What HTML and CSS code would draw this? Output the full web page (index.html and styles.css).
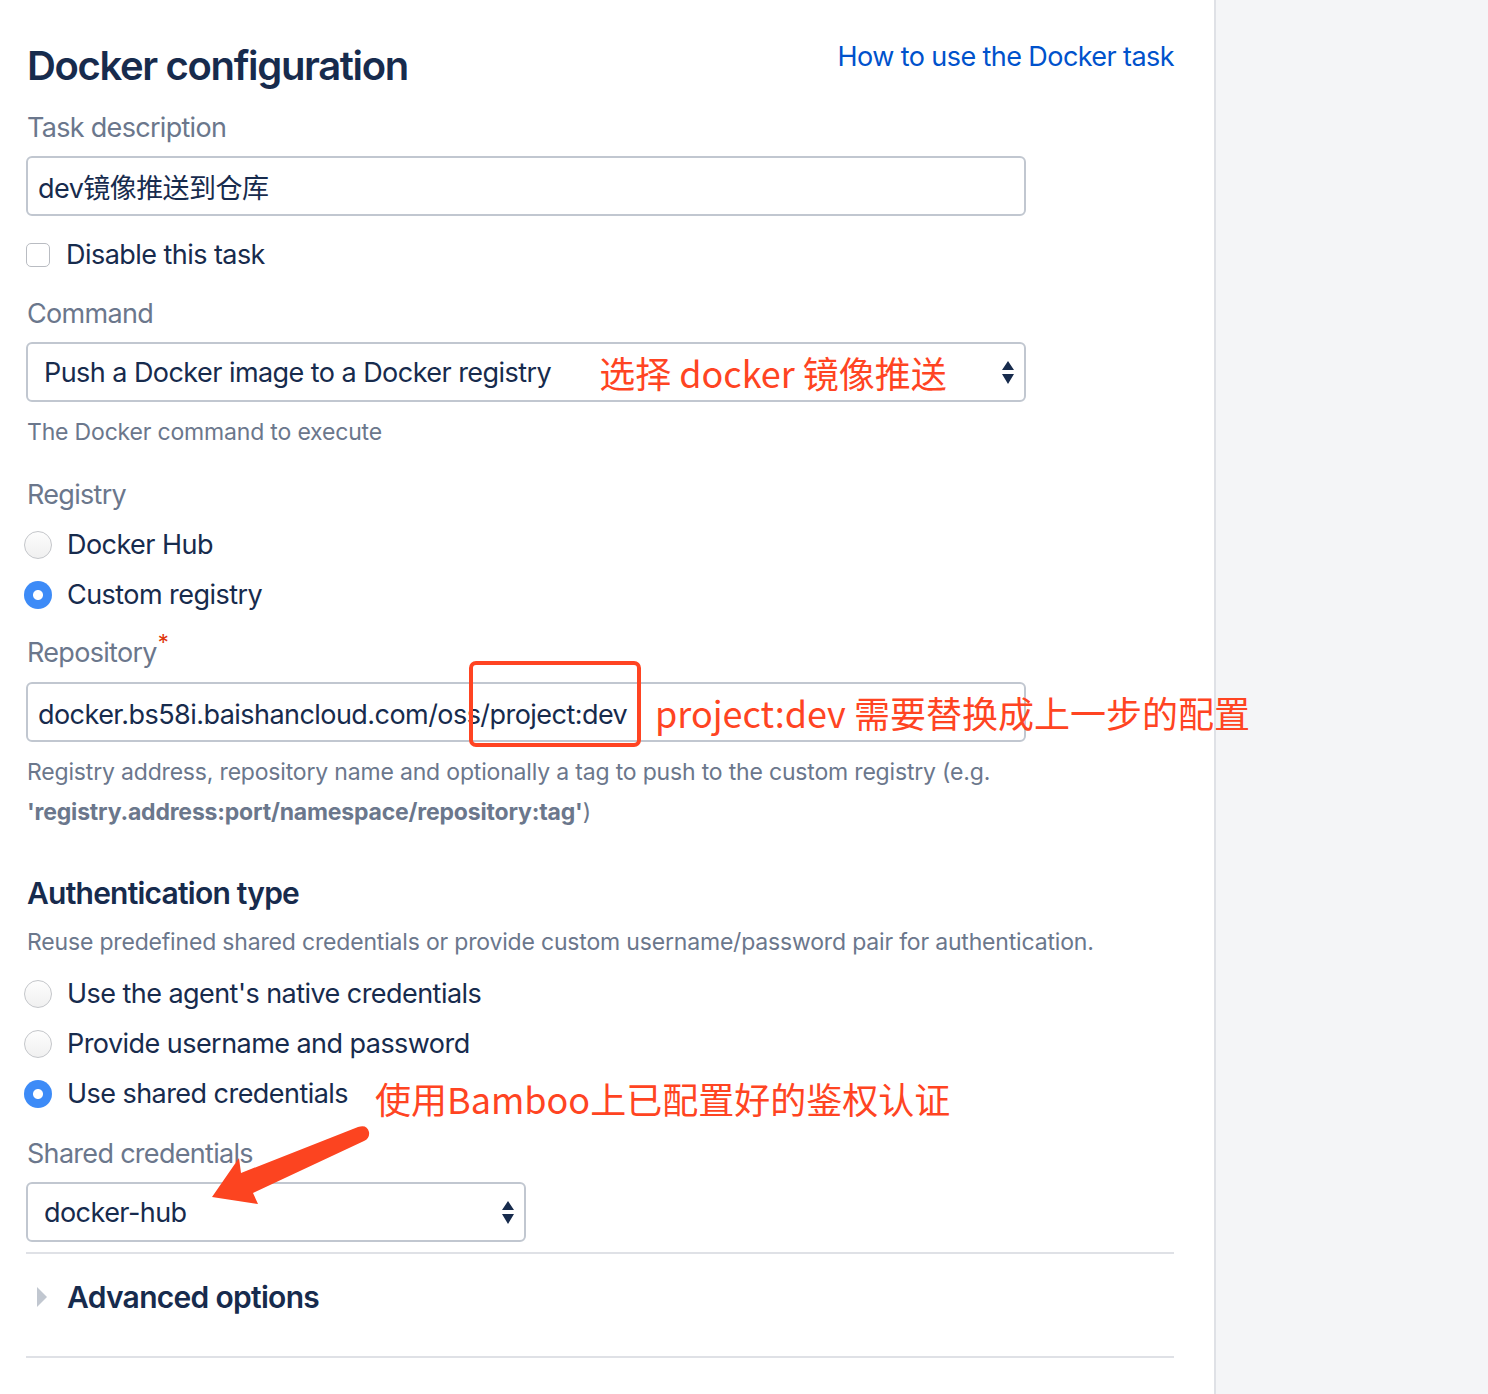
FILE: index.html
```html
<!DOCTYPE html>
<html>
<head>
<meta charset="utf-8">
<link rel="stylesheet" href="styles.css">
</head>
<body>
<div class="page">
  <main class="main">
    <header class="header">
      <h1 class="title">Docker configuration</h1>
      <a class="help-link" href="#">How to use the Docker task</a>
    </header>

    <div class="field field-first">
      <div class="label">Task description</div>
      <div class="input">dev镜像推送到仓库</div>
    </div>

    <label class="check-row">
      <span class="checkbox"></span>
      <span class="opt-text">Disable this task</span>
    </label>

    <div class="field field-command">
      <div class="label">Command</div>
      <div class="select select-wide">
        <span class="select-text">Push a Docker image to a Docker registry</span>
        <span class="annot annot-cmd">选择 docker 镜像推送</span>
        <svg class="updown" width="14" height="26" viewBox="0 0 14 26"><path d="M7 1 L13 10 L1 10 Z M1 14 L13 14 L7 24 Z" fill="#172b4d"/></svg>
      </div>
      <div class="help">The Docker command to execute</div>
    </div>

    <div class="group group-registry">
      <div class="label">Registry</div>
      <div class="radio-row"><span class="radio"></span><span class="opt-text">Docker Hub</span></div>
      <div class="radio-row"><span class="radio checked"></span><span class="opt-text">Custom registry</span></div>
    </div>

    <div class="field field-repo">
      <div class="label">Repository<span class="req">*</span></div>
      <div class="repo-wrap">
        <div class="input input-repo">docker.bs58i.baishancloud.com/oss/project:dev</div>
        <span class="redbox"></span>
        <span class="annot annot-repo">project:dev 需要替换成上一步的配置</span>
      </div>
      <div class="help help-2">Registry address, repository name and optionally a tag to push to the custom registry (e.g. <b>'registry.address:port/namespace/repository:tag'</b>)</div>
    </div>

    <section class="auth">
      <h3 class="auth-title">Authentication type</h3>
      <div class="help auth-desc">Reuse predefined shared credentials or provide custom username/password pair for authentication.</div>
      <div class="radio-row"><span class="radio"></span><span class="opt-text">Use the agent's native credentials</span></div>
      <div class="radio-row"><span class="radio"></span><span class="opt-text">Provide username and password</span></div>
      <div class="radio-row"><span class="radio checked"></span><span class="opt-text">Use shared credentials</span><span class="annot annot-auth">使用Bamboo上已配置好的鉴权认证</span></div>
    </section>

    <div class="field field-shared">
      <div class="label">Shared credentials</div>
      <div class="select select-narrow">
        <span class="select-text">docker-hub</span>
        <svg class="updown" width="14" height="26" viewBox="0 0 14 26"><path d="M7 1 L13 10 L1 10 Z M1 14 L13 14 L7 24 Z" fill="#172b4d"/></svg>
      </div>
    </div>

    <div class="advanced">
      <span class="tri"></span>
      <span class="adv-text">Advanced options</span>
    </div>

    <svg class="red-arrow" width="190" height="100" viewBox="0 0 190 100"><path d="M22 77 L49 38 L51 53 L168 7 Q177 4 179 12 Q180 18 174 21 L63 73 L68 84 Z" fill="#fc4420"/></svg>
  </main>
  <aside class="side"></aside>
</div>
</body>
</html>
```

FILE: styles.css
```css
* { box-sizing: border-box; }
html, body { margin: 0; padding: 0; }
body {
  font-family: Inter, "Noto Sans CJK SC", sans-serif;
  color: #172b4d;
  background: #f4f5f7;
}
.page {
  display: flex;
  width: 1488px;
  min-height: 1394px;
}
.main {
  width: 1216px;
  flex: none;
  background: #fff;
  border-right: 2px solid #dfe1e6;
  padding: 0 40px 0 26px;
  position: relative;
}
.side { flex: 1; background: #f4f5f7; }

.header {
  display: flex;
  justify-content: space-between;
  align-items: flex-start;
  padding-top: 38px;
}
.title {
  margin: 0 0 0 1px;
  font-size: 40px;
  font-weight: 600;
  line-height: 56px;
  letter-spacing: -1.35px;
}
.help-link {
  color: #0052cc;
  text-decoration: none;
  font-size: 27px;
  line-height: 36px;
  margin-top: 1px;
  letter-spacing: -0.58px;
}

.label {
  font-size: 27px;
  line-height: 40px;
  color: #6b778c;
  padding-left: 1px;
  letter-spacing: -0.7px;
}
.field { margin-top: 6px; }
.field-first { margin-top: 14px; }
.label + .input, .label + .select { margin-top: 8px; }

.input, .select {
  height: 60px;
  border: 2px solid #c1c7d0;
  border-radius: 6px;
  font-size: 27px;
  color: #172b4d;
  display: flex;
  align-items: center;
  background: #fff;
  letter-spacing: -0.55px;
}
.input { width: 1000px; padding-left: 10px; }
.input-repo { padding-top: 4px; }
.select { padding-left: 16px; position: relative; }
.select-wide { width: 1000px; }
.select-narrow { width: 500px; }
.updown { position: absolute; right: 9px; top: 16px; }

.check-row {
  display: flex;
  align-items: center;
  height: 50px;
  margin-top: 14px;
}
.checkbox {
  width: 24px; height: 24px;
  border: 1.5px solid #b9bcc2;
  border-radius: 5px;
  margin-right: 16px;
  flex: none;
  background: #fff;
}
.opt-text { font-size: 27px; line-height: 40px; letter-spacing: -0.55px; }

.field-command { margin-top: 14px; }
.help {
  font-size: 23px;
  line-height: 40px;
  color: #6b778c;
  padding-left: 1px;
  letter-spacing: -0.18px;
}
.select + .help { margin-top: 10px; }

.group-registry { margin-top: 23px; }
.radio-row {
  display: flex;
  align-items: center;
  height: 50px;
  position: relative;
}
.group-registry .label { margin-bottom: 5px; }
.radio {
  width: 28px; height: 28px;
  border-radius: 50%;
  border: 1.5px solid #c4c6ca;
  background: linear-gradient(#fdfdfd, #f0f0f0);
  margin: 0 15px 0 -2px;
  flex: none;
}
.radio.checked {
  border: none;
  background: radial-gradient(circle, #fff 0 4.5px, #3d8bf7 5.5px);
}

.field-repo { margin-top: 2px; }
.req { color: #de350b; font-size: 22px; vertical-align: 12px; margin-left: 1px; }
.repo-wrap { position: relative; margin-top: 9px; }
.redbox {
  position: absolute;
  left: 443px; top: -21px;
  width: 172px; height: 86px;
  border: 4px solid #ff4422;
  border-radius: 7px;
}
.annot {
  color: #ff4422;
  font-family: "Noto Sans CJK SC", sans-serif;
  font-size: 36px;
  white-space: nowrap;
  letter-spacing: 0;
}
.annot-cmd { margin-left: 48px; }
.annot-repo { position: absolute; left: 629px; top: 2px; line-height: 56px; }
.annot-auth { position: absolute; left: 349px; top: 1px; line-height: 56px; }
.help-2 { margin-top: 10px; width: 1000px; }
.help-2 b { font-weight: 700; }

.auth { margin-top: 39px; }
.auth-title {
  margin: 0;
  font-size: 30px;
  font-weight: 600;
  line-height: 44px;
  letter-spacing: -0.77px;
  padding-left: 1px;
}
.auth-desc { margin-top: 7px; margin-bottom: 7px; }

.field-shared { margin-top: 15px; }
.red-arrow { position: absolute; left: 190px; top: 1120px; }

.advanced {
  border-top: 2px solid #dfe1e6;
  border-bottom: 2px solid #dfe1e6;
  margin-top: 10px;
  height: 106px;
  display: flex;
  align-items: center;
  padding-bottom: 16px;
}
.tri {
  width: 0; height: 0;
  border-left: 10px solid #c1c7d0;
  border-top: 10px solid transparent;
  border-bottom: 10px solid transparent;
  margin: 0 20px 0 11px;
}
.adv-text {
  font-size: 30px;
  font-weight: 600;
  letter-spacing: -0.7px;
}
```
